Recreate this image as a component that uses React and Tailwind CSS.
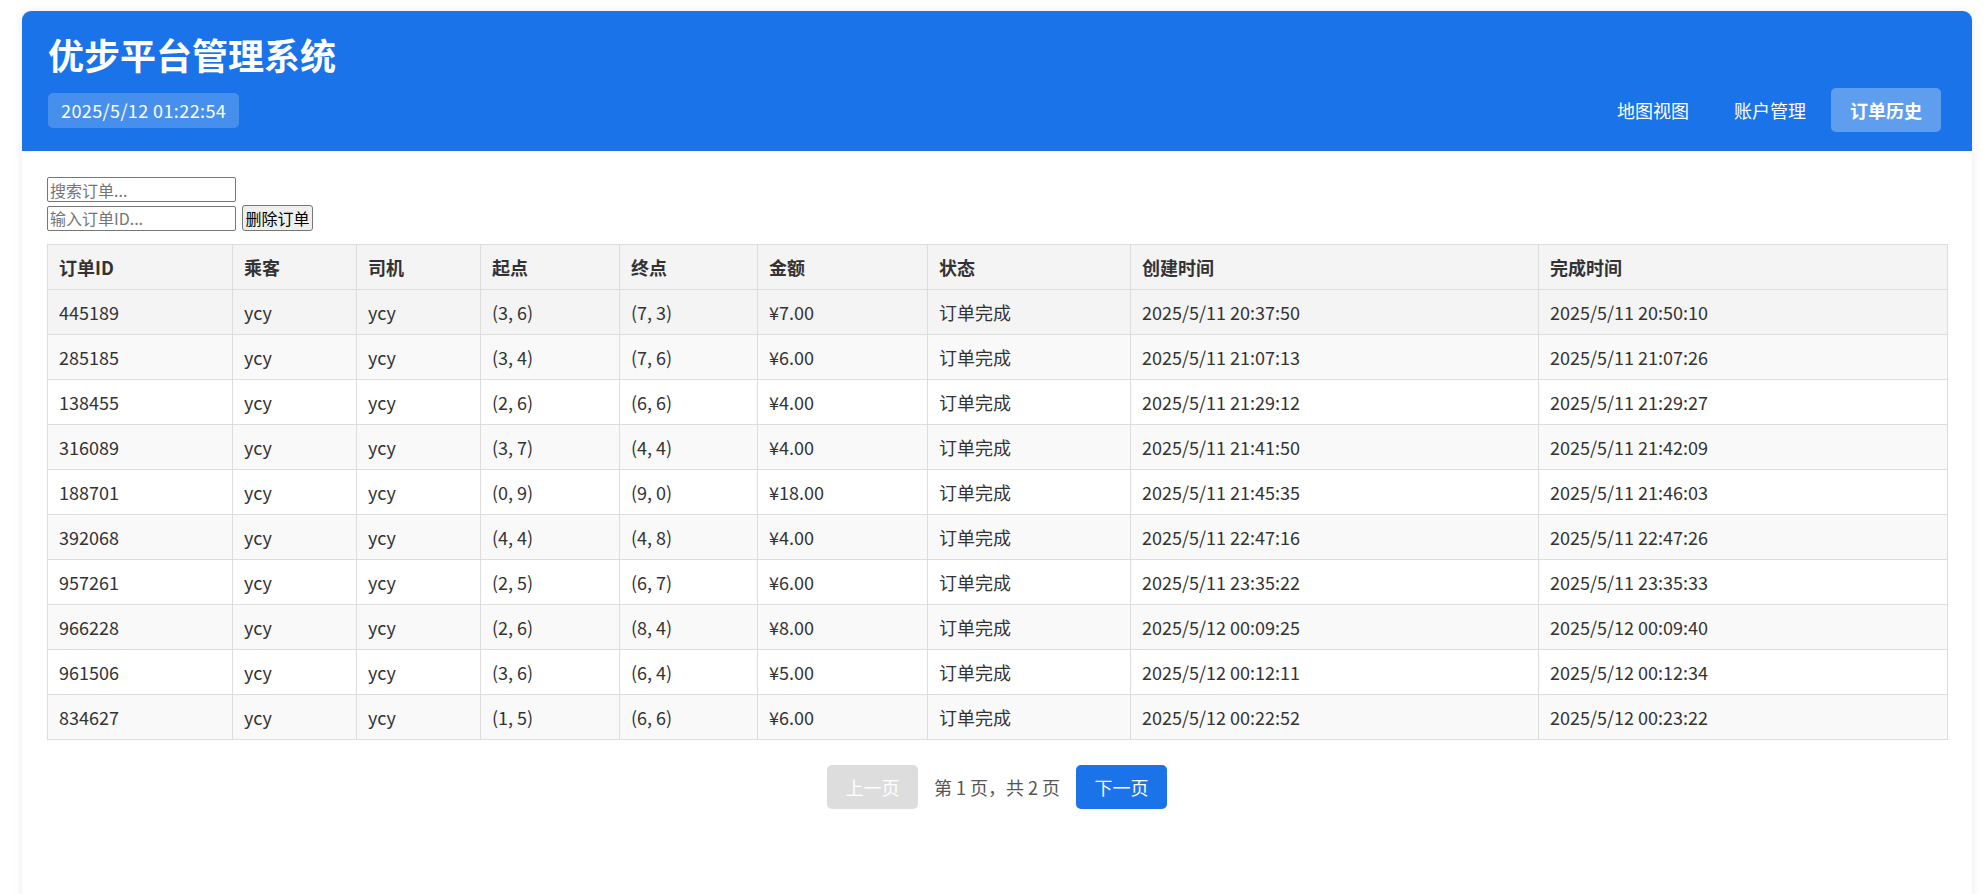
import React from "react";

const orders = [
  ["445189", "ycy", "ycy", "(3, 6)", "(7, 3)", "¥7.00", "订单完成", "2025/5/11 20:37:50", "2025/5/11 20:50:10"],
  ["285185", "ycy", "ycy", "(3, 4)", "(7, 6)", "¥6.00", "订单完成", "2025/5/11 21:07:13", "2025/5/11 21:07:26"],
  ["138455", "ycy", "ycy", "(2, 6)", "(6, 6)", "¥4.00", "订单完成", "2025/5/11 21:29:12", "2025/5/11 21:29:27"],
  ["316089", "ycy", "ycy", "(3, 7)", "(4, 4)", "¥4.00", "订单完成", "2025/5/11 21:41:50", "2025/5/11 21:42:09"],
  ["188701", "ycy", "ycy", "(0, 9)", "(9, 0)", "¥18.00", "订单完成", "2025/5/11 21:45:35", "2025/5/11 21:46:03"],
  ["392068", "ycy", "ycy", "(4, 4)", "(4, 8)", "¥4.00", "订单完成", "2025/5/11 22:47:16", "2025/5/11 22:47:26"],
  ["957261", "ycy", "ycy", "(2, 5)", "(6, 7)", "¥6.00", "订单完成", "2025/5/11 23:35:22", "2025/5/11 23:35:33"],
  ["966228", "ycy", "ycy", "(2, 6)", "(8, 4)", "¥8.00", "订单完成", "2025/5/12 00:09:25", "2025/5/12 00:09:40"],
  ["961506", "ycy", "ycy", "(3, 6)", "(6, 4)", "¥5.00", "订单完成", "2025/5/12 00:12:11", "2025/5/12 00:12:34"],
  ["834627", "ycy", "ycy", "(1, 5)", "(6, 6)", "¥6.00", "订单完成", "2025/5/12 00:22:52", "2025/5/12 00:23:22"],
];

const columns = [
  ["订单ID", "w-[185px]"],
  ["乘客", "w-[124px]"],
  ["司机", "w-[124px]"],
  ["起点", "w-[139px]"],
  ["终点", "w-[138px]"],
  ["金额", "w-[170px]"],
  ["状态", "w-[203px]"],
  ["创建时间", "w-[408px]"],
  ["完成时间", "w-[409px]"],
];

const App = () => {
  return (
    <div className="min-h-screen bg-white pt-[11px] pl-[22px] pr-[14px] font-['Noto_Sans_CJK_SC','Noto_Sans',sans-serif] text-[#333]">
      <div className="min-h-[900px] rounded-t-[9px] bg-white shadow-[0_0_10px_rgba(0,0,0,0.08)]">
        {/* Header */}
        <div className="flex items-end justify-between rounded-t-[9px] bg-[#1a73e8] pl-[26px] pr-[31px] pt-[22px] pb-[23px] text-white">
          <div>
            <h1 className="text-[36px] font-bold leading-[43px]">优步平台管理系统</h1>
            <div className="mt-[17px] inline-block rounded-[5px] bg-white/20 px-[13px] py-[5px] text-[18px] leading-[25px] tracking-[0.4px]">
              2025/5/12 01:22:54
            </div>
          </div>
          <nav className="-mb-[4px] flex gap-[5px] text-[18px]">
            <button className="rounded-[5px] px-[20px] py-[10px] leading-[24px]">地图视图</button>
            <button className="rounded-[5px] px-[20px] py-[10px] leading-[24px]">账户管理</button>
            <button className="rounded-[5px] bg-white/30 px-[19px] py-[10px] font-bold leading-[24px]">订单历史</button>
          </nav>
        </div>

        {/* Content */}
        <div className="px-[25px] pt-[26px]">
          <div>
            <input
              placeholder="搜索订单..."
              className="h-[25px] w-[189px] rounded-[2px] border border-[#767676] px-[2px] text-[16px] placeholder:text-[#757575]"
            />
          </div>
          <div className="mt-[3px] flex items-center gap-[6px]">
            <input
              placeholder="输入订单ID..."
              className="h-[25px] w-[189px] rounded-[2px] border border-[#767676] px-[2px] text-[16px] placeholder:text-[#757575]"
            />
            <button className="h-[26px] w-[71px] rounded-[3px] border border-[#767676] bg-[#efefef] text-[16px] leading-[20px] text-black">
              删除订单
            </button>
          </div>

          <table className="mt-[13px] w-[1900px] table-fixed border-collapse text-[18px]">
            <colgroup>
              {columns.map(([name, w]) => (
                <col key={name} className={w} />
              ))}
            </colgroup>
            <thead>
              <tr className="bg-[#f4f4f4]">
                {columns.map(([name]) => (
                  <th key={name} className="border border-[#ddd] px-[11px] py-[10px] text-left font-bold leading-[24px]">
                    {name}
                  </th>
                ))}
              </tr>
            </thead>
            <tbody>
              {orders.map((row, i) => (
                <tr
                  key={row[0]}
                  className={i === 0 ? "bg-[#f4f4f4]" : i % 2 === 1 ? "bg-[#f9f9f9]" : "bg-white"}
                >
                  {row.map((cell, j) => (
                    <td key={j} className="border border-[#ddd] px-[11px] py-[10px] leading-[24px]">
                      {cell}
                    </td>
                  ))}
                </tr>
              ))}
            </tbody>
          </table>

          {/* Pagination */}
          <div className="mt-[25px] flex items-center justify-center gap-[13px] text-[18px]">
            <button disabled className="h-[44px] w-[91px] rounded-[5px] bg-[#ddd] leading-[24px] text-white">
              上一页
            </button>
            <span className="px-[3px] text-[#555]">第 1 页，共 2 页</span>
            <button className="h-[44px] w-[91px] rounded-[5px] bg-[#1a73e8] leading-[24px] text-white">
              下一页
            </button>
          </div>
        </div>
      </div>
    </div>
  );
};

export default App;
